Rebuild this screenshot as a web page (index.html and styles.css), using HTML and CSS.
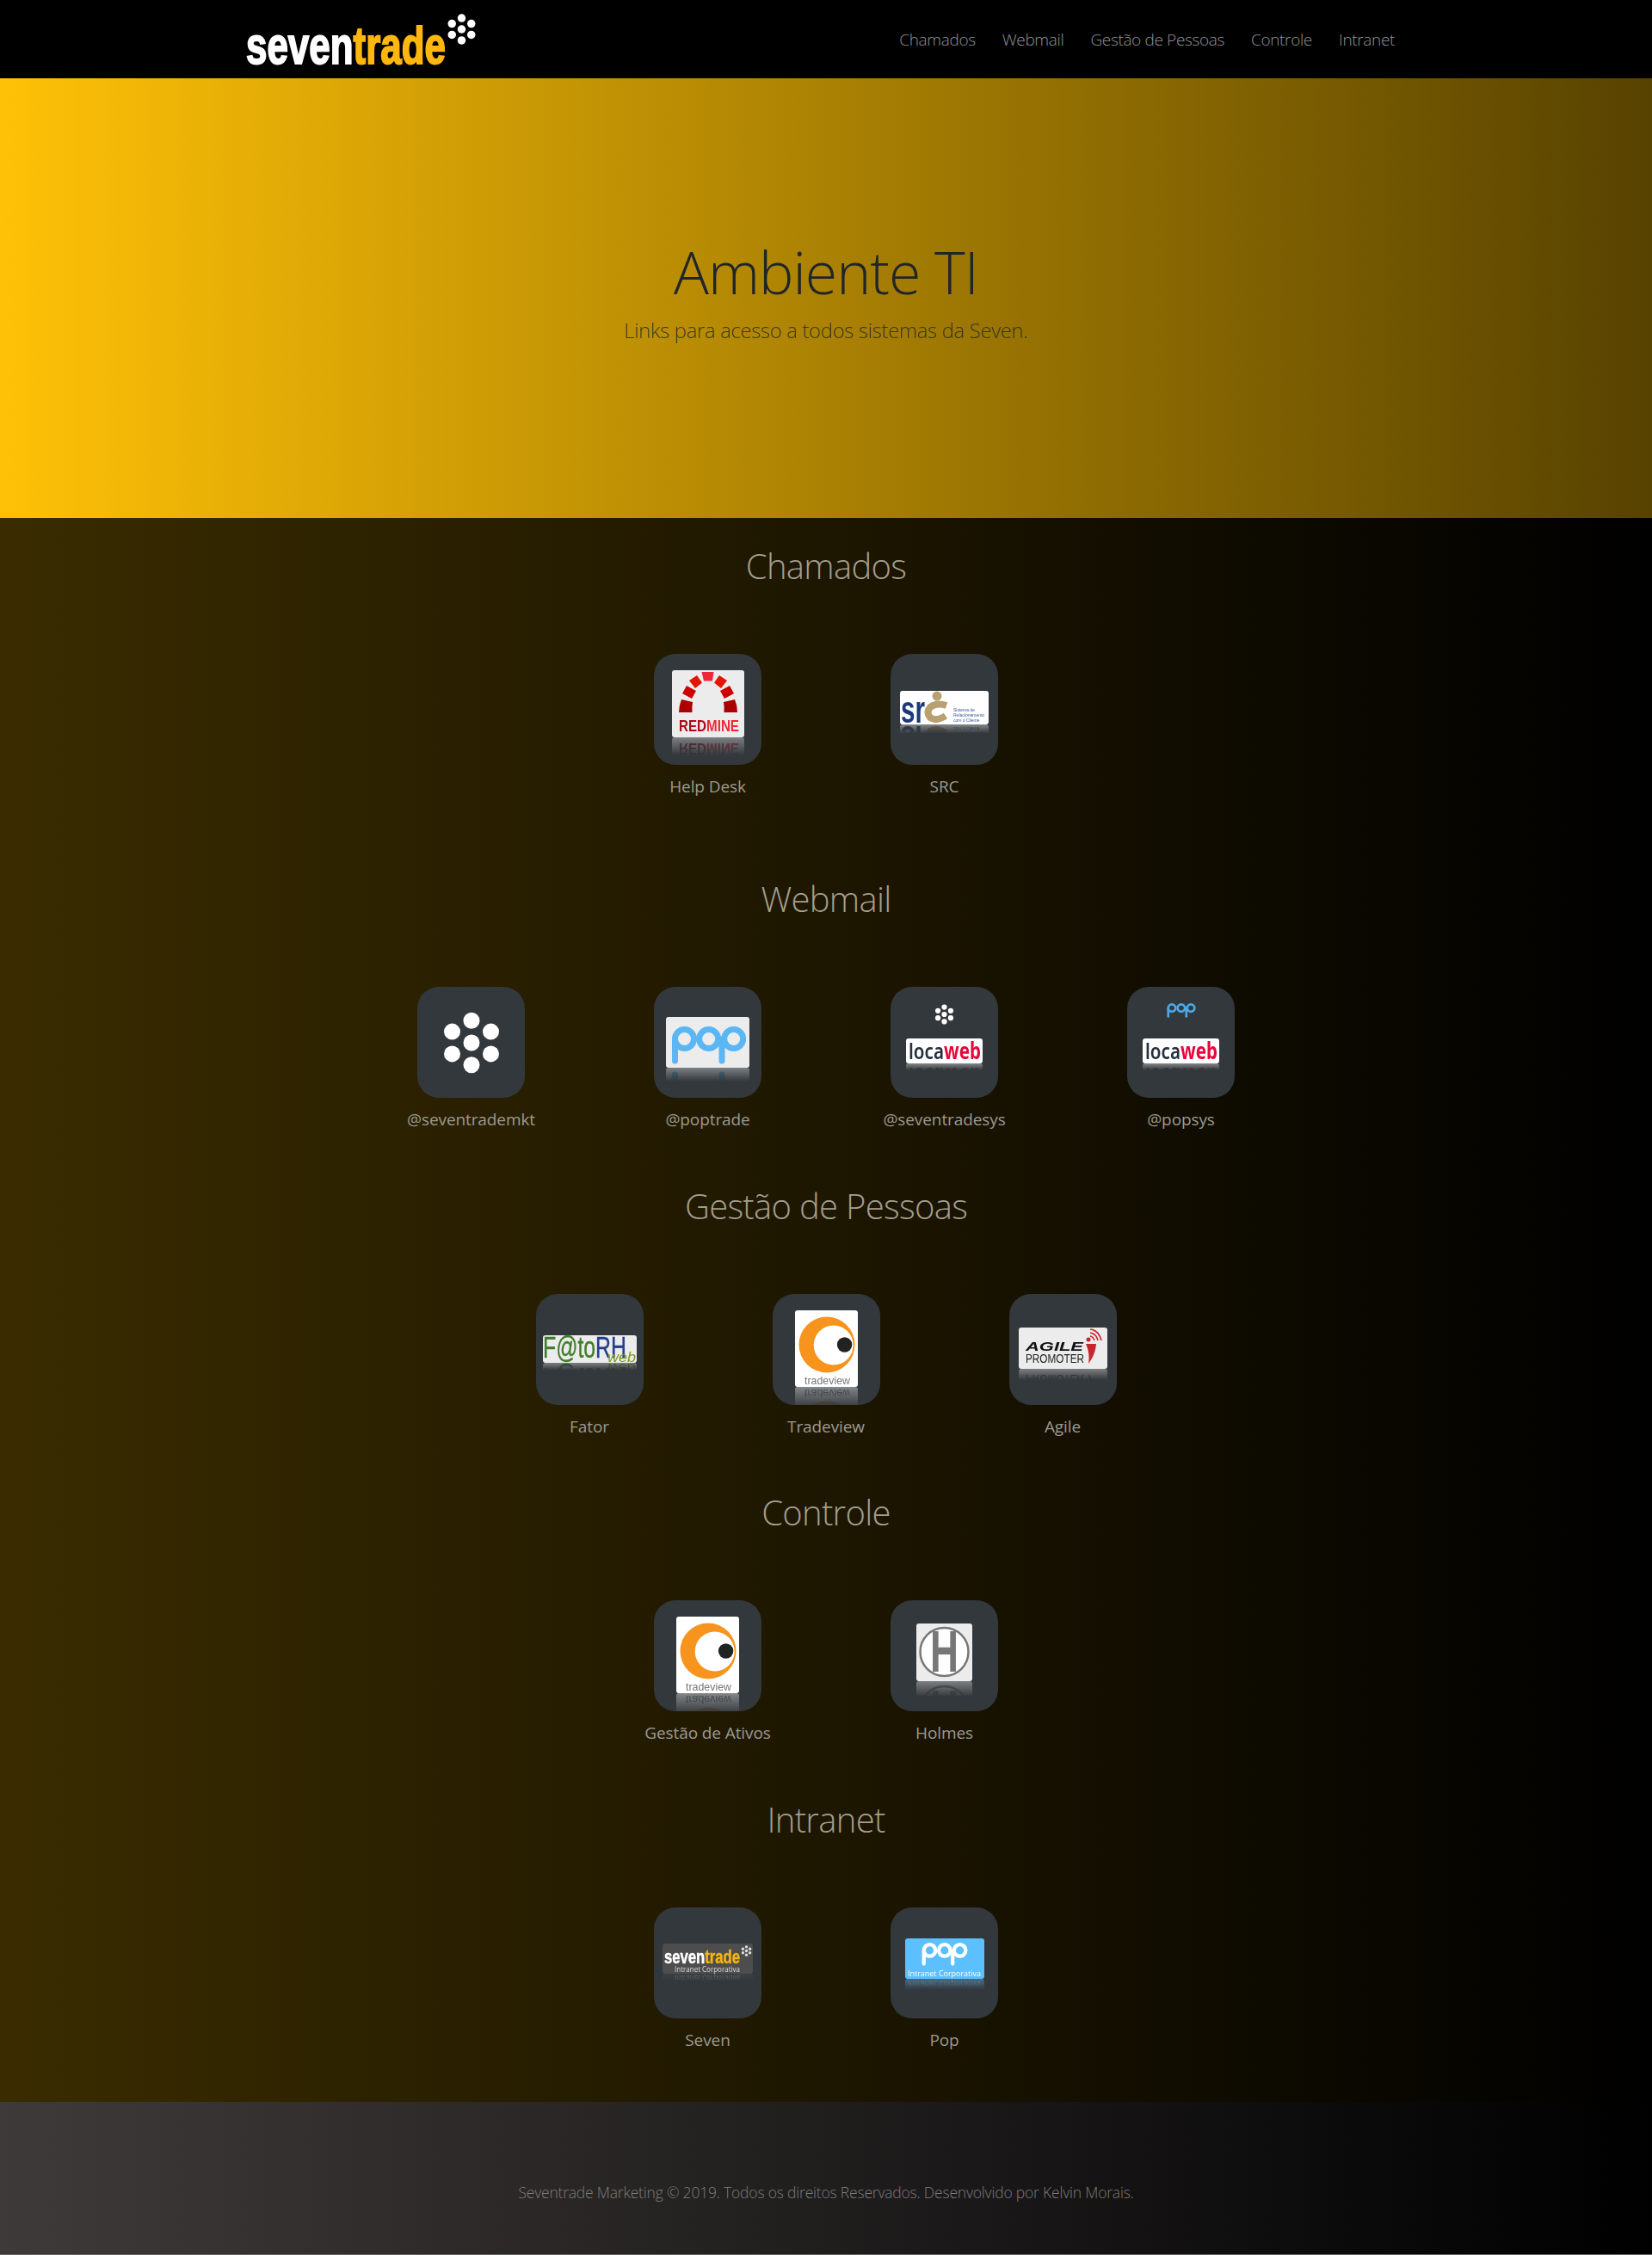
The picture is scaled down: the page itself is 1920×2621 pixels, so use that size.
FILE: index.html
```html
<!DOCTYPE html>
<html lang="pt-br">
<head>
    <meta charset="utf-8">
    <title>Ambiente TI - Seventrade</title>
    <link rel="stylesheet" href="styles.css">
</head>
<body>
    <svg class="symbols" xmlns="http://www.w3.org/2000/svg">
        <symbol id="dots" viewBox="-35 -36 70 72">
            <circle cx="0" cy="0" r="9.5"/>
            <circle cx="0" cy="-25.8" r="9.5"/>
            <circle cx="0" cy="25.8" r="9.5"/>
            <circle cx="-22.5" cy="-12.9" r="9.5"/>
            <circle cx="22.5" cy="-12.9" r="9.5"/>
            <circle cx="-22.5" cy="12.9" r="9.5"/>
            <circle cx="22.5" cy="12.9" r="9.5"/>
        </symbol>
        <symbol id="pop" viewBox="7 11 86 44">
            <g fill="none" stroke="currentColor" stroke-width="7" stroke-linecap="round">
                <circle cx="21.5" cy="25.5" r="11"/>
                <circle cx="49.7" cy="25.5" r="11"/>
                <circle cx="78.7" cy="25.5" r="11"/>
                <line x1="10.500" y1="26" x2="10.500" y2="51"/>
                <line x1="65" y1="26" x2="65" y2="51"/>
            </g>
        </symbol>
        <symbol id="tradeview" viewBox="0 0 73 89">
            <circle cx="37" cy="40" r="32.5" fill="#f7941e"/>
            <circle cx="44.7" cy="40.5" r="23" fill="#fff"/>
            <circle cx="57.6" cy="40" r="8.7" fill="#222"/>
            <text class="t-tradeview" x="11" y="85.500" textLength="53" lengthAdjust="spacingAndGlyphs">tradeview</text>
        </symbol>
        <symbol id="locaweb" viewBox="0 0 89 29">
            <text class="t-locaweb" x="3" y="24" textLength="84" lengthAdjust="spacingAndGlyphs">loca<tspan class="t-web">web</tspan></text>
        </symbol>
    </svg>

    <header class="topbar">
        <a class="brand" href="#">
            <svg width="270" height="90" viewBox="0 0 270 90">
                <text class="t-brand" x="1" y="73" textLength="232" lengthAdjust="spacingAndGlyphs">seven<tspan class="t-brand-gold">trade</tspan></text>
                <use href="#dots" x="234" y="15" width="35" height="36" fill="#fff"/>
            </svg>
        </a>
        <nav class="topnav">
            <a href="#chamados">Chamados</a>
            <a href="#webmail">Webmail</a>
            <a href="#pessoas">Gestão de Pessoas</a>
            <a href="#controle">Controle</a>
            <a href="#intranet">Intranet</a>
        </nav>
    </header>

    <section class="hero">
        <h1>Ambiente TI</h1>
        <p>Links para acesso a todos sistemas da Seven.</p>
    </section>

    <main class="apps">
        <section class="app-group app-group-first" id="chamados">
            <h2>Chamados</h2>
            <div class="app-row">
                <a class="app" href="#">
                    <span class="tile">
                        <span class="logo logo-redmine">
                            <svg width="84" height="78" viewBox="0 0 84 78">
                                <polygon fill="#ee2839" points="34.5,2 48.5,2 47,12.500 37,12.500"/>
                                <g id="redmine-arch">
                                    <polygon fill="#e21500" points="29,6 35,14.500 27,21 20,12"/>
                                    <polygon fill="#cc0000" points="17,18 28,24 23,33 12,27"/>
                                    <path fill="#aa0000" d="M11 34 L24 37 Q23 43 23.500 49 H8 Q8 41 11 34 Z"/>
                                </g>
                                <use href="#redmine-arch" transform="translate(84 0) scale(-1 1)"/>
                                <text class="t-redmine" x="8" y="71" textLength="70" lengthAdjust="spacingAndGlyphs">RED<tspan class="t-redmine-light">MINE</tspan></text>
                            </svg>
                        </span>
                    </span>
                    <span class="app-name">Help Desk</span>
                </a>
                <a class="app" href="#">
                    <span class="tile">
                        <span class="logo logo-src">
                            <svg width="103" height="39" viewBox="0 0 103 39">
                                <text class="t-src" x="1" y="37" textLength="28" lengthAdjust="spacingAndGlyphs">sr</text>
                                <circle cx="43" cy="6" r="5.500" fill="#b8a070"/>
                                <path d="M54 17 Q42 13 35 19 Q30 25 35 31 Q42 36 53 29" fill="none" stroke="#b8a070" stroke-width="8"/>
                                <text class="t-src-small" x="62" y="24">Sistema de</text>
                                <text class="t-src-small" x="62" y="30">Relacionamento</text>
                                <text class="t-src-small" x="62" y="36">com o Cliente</text>
                            </svg>
                        </span>
                    </span>
                    <span class="app-name">SRC</span>
                </a>
            </div>
        </section>

        <section class="app-group" id="webmail">
            <h2>Webmail</h2>
            <div class="app-row">
                <a class="app" href="#">
                    <span class="tile">
                        <svg class="mark-dots" width="70" height="72"><use href="#dots" width="70" height="72"/></svg>
                    </span>
                    <span class="app-name">@seventrademkt</span>
                </a>
                <a class="app" href="#">
                    <span class="tile">
                        <span class="logo logo-pop">
                            <svg class="pop-blue" width="97" height="59" viewBox="0 0 97 59">
                                <use href="#pop" x="7" y="11" width="86" height="44"/>
                            </svg>
                        </span>
                    </span>
                    <span class="app-name">@poptrade</span>
                </a>
                <a class="app" href="#">
                    <span class="tile">
                        <span class="logo-stack">
                            <svg class="mark-dots stack-mark" width="23" height="26"><use href="#dots" width="23" height="26"/></svg>
                            <span class="logo logo-locaweb">
                                <svg width="89" height="29"><use href="#locaweb" width="89" height="29"/></svg>
                            </span>
                        </span>
                    </span>
                    <span class="app-name">@seventradesys</span>
                </a>
                <a class="app" href="#">
                    <span class="tile">
                        <span class="logo-stack">
                            <svg class="pop-sky stack-mark" width="34" height="17"><use href="#pop" width="34" height="17"/></svg>
                            <span class="logo logo-locaweb">
                                <svg width="89" height="29"><use href="#locaweb" width="89" height="29"/></svg>
                            </span>
                        </span>
                    </span>
                    <span class="app-name">@popsys</span>
                </a>
            </div>
        </section>

        <section class="app-group" id="pessoas">
            <h2>Gestão de Pessoas</h2>
            <div class="app-row">
                <a class="app" href="#">
                    <span class="tile">
                        <span class="logo logo-fator">
                            <svg width="109" height="32" viewBox="0 0 109 32">
                                <text class="t-fator" x="0" y="26" textLength="97" lengthAdjust="spacingAndGlyphs">F@to<tspan class="t-fator-blue">RH</tspan></text>
                                <text class="t-fator-web" x="75" y="31" textLength="33" lengthAdjust="spacingAndGlyphs">web</text>
                            </svg>
                        </span>
                    </span>
                    <span class="app-name">Fator</span>
                </a>
                <a class="app" href="#">
                    <span class="tile">
                        <span class="logo logo-tradeview">
                            <svg width="73" height="89"><use href="#tradeview" width="73" height="89"/></svg>
                        </span>
                    </span>
                    <span class="app-name">Tradeview</span>
                </a>
                <a class="app" href="#">
                    <span class="tile">
                        <span class="logo logo-agile">
                            <svg width="103" height="48" viewBox="0 0 103 48">
                                <text class="t-agile" x="8" y="27" textLength="67" lengthAdjust="spacingAndGlyphs">AGILE</text>
                                <text class="t-promoter" x="8" y="41" textLength="68" lengthAdjust="spacingAndGlyphs">PROMOTER</text>
                                <circle cx="81" cy="14" r="2.500" fill="#c8242b"/>
                                <path d="M78 19 H90 Q89 32 81 42 Q83 30 78 19 Z" fill="#c8242b"/>
                                <path d="M83 10 Q87 11 88 15 M83 6 Q90 7 92 15 M83 2 Q93 3 96 15" fill="none" stroke="#c8242b" stroke-width="1.600"/>
                            </svg>
                        </span>
                    </span>
                    <span class="app-name">Agile</span>
                </a>
            </div>
        </section>

        <section class="app-group" id="controle">
            <h2>Controle</h2>
            <div class="app-row">
                <a class="app" href="#">
                    <span class="tile">
                        <span class="logo logo-tradeview">
                            <svg width="73" height="89"><use href="#tradeview" width="73" height="89"/></svg>
                        </span>
                    </span>
                    <span class="app-name">Gestão de Ativos</span>
                </a>
                <a class="app" href="#">
                    <span class="tile">
                        <span class="logo logo-holmes">
                            <svg width="65" height="67" viewBox="0 0 65 67">
                                <circle cx="32.500" cy="33" r="28" fill="#fff" stroke="#777" stroke-width="2.500"/>
                                <text class="t-holmes" x="16" y="56" textLength="33" lengthAdjust="spacingAndGlyphs">H</text>
                            </svg>
                        </span>
                    </span>
                    <span class="app-name">Holmes</span>
                </a>
            </div>
        </section>

        <section class="app-group" id="intranet">
            <h2>Intranet</h2>
            <div class="app-row">
                <a class="app" href="#">
                    <span class="tile">
                        <span class="logo logo-seven">
                            <svg width="105" height="35" viewBox="0 0 105 35">
                                <text class="t-brand-small" x="2" y="23" textLength="88" lengthAdjust="spacingAndGlyphs">seven<tspan class="t-brand-small-gold">trade</tspan></text>
                                <use href="#dots" x="91" y="2" width="13" height="13" fill="#ddd"/>
                                <text class="t-corp" x="14" y="32.500" textLength="76" lengthAdjust="spacingAndGlyphs">Intranet Corporativa</text>
                            </svg>
                        </span>
                    </span>
                    <span class="app-name">Seven</span>
                </a>
                <a class="app" href="#">
                    <span class="tile">
                        <span class="logo logo-popnet">
                            <svg class="pop-white" width="92" height="47" viewBox="0 0 92 47">
                                <use href="#pop" x="19" y="5" width="54" height="27"/>
                                <text class="t-corp t-corp-large" x="3" y="43.500" textLength="85" lengthAdjust="spacingAndGlyphs">Intranet Corporativa</text>
                            </svg>
                        </span>
                    </span>
                    <span class="app-name">Pop</span>
                </a>
            </div>
        </section>
    </main>

    <footer class="footer">
        <p>Seventrade Marketing © 2019. Todos os direitos Reservados. Desenvolvido por Kelvin Morais.</p>
    </footer>
</body>
</html>
```

FILE: styles.css
```css
body {
    margin: 0;
    background-color: #666;
    font-family: "Open Sans", "Noto Sans", sans-serif;
}

a {
    text-decoration: none;
}

.symbols {
    display: none;
}

/* top bar */
.topbar {
    display: flex;
    justify-content: space-between;
    align-items: center;
    height: 91px;
    padding: 0 299px 0 285px;
    background-color: #000;
}

.brand svg {
    display: block;
    overflow: visible;
}

.t-brand {
    font-family: "Liberation Sans", sans-serif;
    font-size: 61px;
    font-weight: 700;
    fill: #fff;
    stroke: #fff;
    stroke-width: 2px;
}

.t-brand-gold {
    fill: #ffb70f;
    stroke: #ffb70f;
}

.topnav {
    display: flex;
    gap: 31px;
}

.topnav a {
    color: #8f9396;
    font-size: 19px;
    font-weight: 300;
    line-height: 30px;
    letter-spacing: -0.35px;
}

/* hero */
.hero {
    display: flex;
    flex-direction: column;
    align-items: center;
    height: 511px;
    box-sizing: border-box;
    padding-top: 175px;
    background: linear-gradient(to right, #ffc107, #574200);
    color: #212529;
    font-weight: 300;
}

.hero h1 {
    margin: 0;
    font-size: 68px;
    font-weight: 300;
    line-height: 100px;
    letter-spacing: -1px;
}

.hero p {
    margin: 0;
    font-size: 24px;
    line-height: 36px;
    letter-spacing: -0.4px;
    opacity: 0.8;
}

/* app groups */
.apps {
    padding-bottom: 28px;
    background: linear-gradient(to right, #3a2c00, #000);
}

.app-group {
    padding: 33px 0 27.7px;
    text-align: center;
}

.app-group-first {
    padding-top: 32px;
    padding-bottom: 58px;
}

.app-group h2 {
    margin: 0 0 78px;
    color: #a39e8e;
    font-size: 40px;
    font-weight: 300;
    line-height: 48px;
    letter-spacing: -0.7px;
}

.app-row {
    display: flex;
    justify-content: center;
}

.app {
    display: flex;
    flex-direction: column;
    align-items: center;
    width: 275px;
}

.tile {
    display: flex;
    align-items: center;
    justify-content: center;
    width: 125px;
    height: 129px;
    overflow: hidden;
    border-radius: 25px;
    background-color: #33383c;
}

.app-name {
    margin-top: 9px;
    color: #9c9a90;
    font-size: 19px;
    line-height: 32px;
    letter-spacing: -0.1px;
}

/* logos */
.logo {
    display: block;
    border-radius: 3px;
    background-color: #ececec;
    -webkit-box-reflect: below 0 linear-gradient(transparent 73%, rgba(255, 255, 255, 0.4));
}

.logo svg,
.stack-mark {
    display: block;
    overflow: visible;
}

.logo-redmine {
    margin-bottom: 14px;
}

.logo-src,
.logo-locaweb,
.logo-tradeview {
    background-color: #fff;
}

.logo-src {
    margin-bottom: 4px;
}

.logo-tradeview {
    margin-bottom: 2px;
}

.logo-holmes {
    margin-bottom: 8px;
}

.logo-agile {
    margin-bottom: 3px;
}

.logo-seven {
    margin-bottom: 10px;
    background-color: #4d4d4d;
}

.logo-popnet {
    margin-bottom: 10px;
    background-color: #5cc0ff;
}

.logo-stack {
    display: flex;
    flex-direction: column;
    align-items: center;
    margin-bottom: 21px;
}

.stack-mark {
    height: 26px;
    margin-bottom: 15px;
}

.mark-dots {
    fill: #fff;
}

.pop-blue {
    color: #5ab6f5;
}

.pop-sky {
    color: #4aa8e8;
}

.pop-white {
    color: #fff;
}

/* logo texts */
.t-redmine {
    font-family: "Liberation Sans", sans-serif;
    font-size: 19px;
    font-weight: 700;
    fill: #b1091c;
}

.t-redmine-light {
    fill: #ee2839;
}

.t-src {
    font-family: "Liberation Sans", sans-serif;
    font-size: 45px;
    font-weight: 700;
    fill: #1c3a7a;
}

.t-src-small {
    font-family: "Liberation Sans", sans-serif;
    font-size: 5px;
    fill: #3a5a98;
}

.t-tradeview {
    font-family: "Liberation Sans", sans-serif;
    font-size: 13px;
    fill: #777;
}

.t-locaweb {
    font-family: "Noto Sans", sans-serif;
    font-size: 26px;
    font-weight: 600;
    fill: #27303f;
}

.t-web {
    font-weight: 700;
    fill: #e8063c;
}

.t-fator {
    font-family: "Liberation Sans", sans-serif;
    font-size: 35px;
    fill: #3f7d2a;
    stroke: #3f7d2a;
    stroke-width: 0.4px;
}

.t-fator-blue {
    fill: #233f8c;
    stroke: #233f8c;
}

.t-fator-web {
    font-family: "Liberation Sans", sans-serif;
    font-size: 17px;
    font-style: italic;
    fill: #7c9a1e;
}

.t-agile {
    font-family: "Liberation Sans", sans-serif;
    font-size: 14px;
    font-style: italic;
    font-weight: 700;
    fill: #111;
}

.t-promoter {
    font-family: "Liberation Sans", sans-serif;
    font-size: 14px;
    fill: #222;
}

.t-holmes {
    font-family: "Liberation Sans", sans-serif;
    font-size: 68px;
    font-weight: 700;
    fill: #777;
}

.t-brand-small {
    font-family: "Liberation Sans", sans-serif;
    font-size: 22px;
    font-weight: 700;
    fill: #fff;
    stroke: #fff;
    stroke-width: 0.5px;
}

.t-brand-small-gold {
    fill: #f6b40e;
    stroke: #f6b40e;
}

.t-corp {
    font-family: "Open Sans", sans-serif;
    font-size: 8.5px;
    fill: #ddd;
}

.t-corp-large {
    font-size: 9.5px;
    fill: #fff;
}

/* footer */
.footer {
    display: flex;
    align-items: center;
    justify-content: center;
    height: 177px;
    background: linear-gradient(to right, #3f3a3a, #000);
    color: #7c7c7c;
    font-size: 17.5px;
    font-weight: 300;
}

.footer p {
    margin: 34px 0 0;
    letter-spacing: -0.2px;
}
```
